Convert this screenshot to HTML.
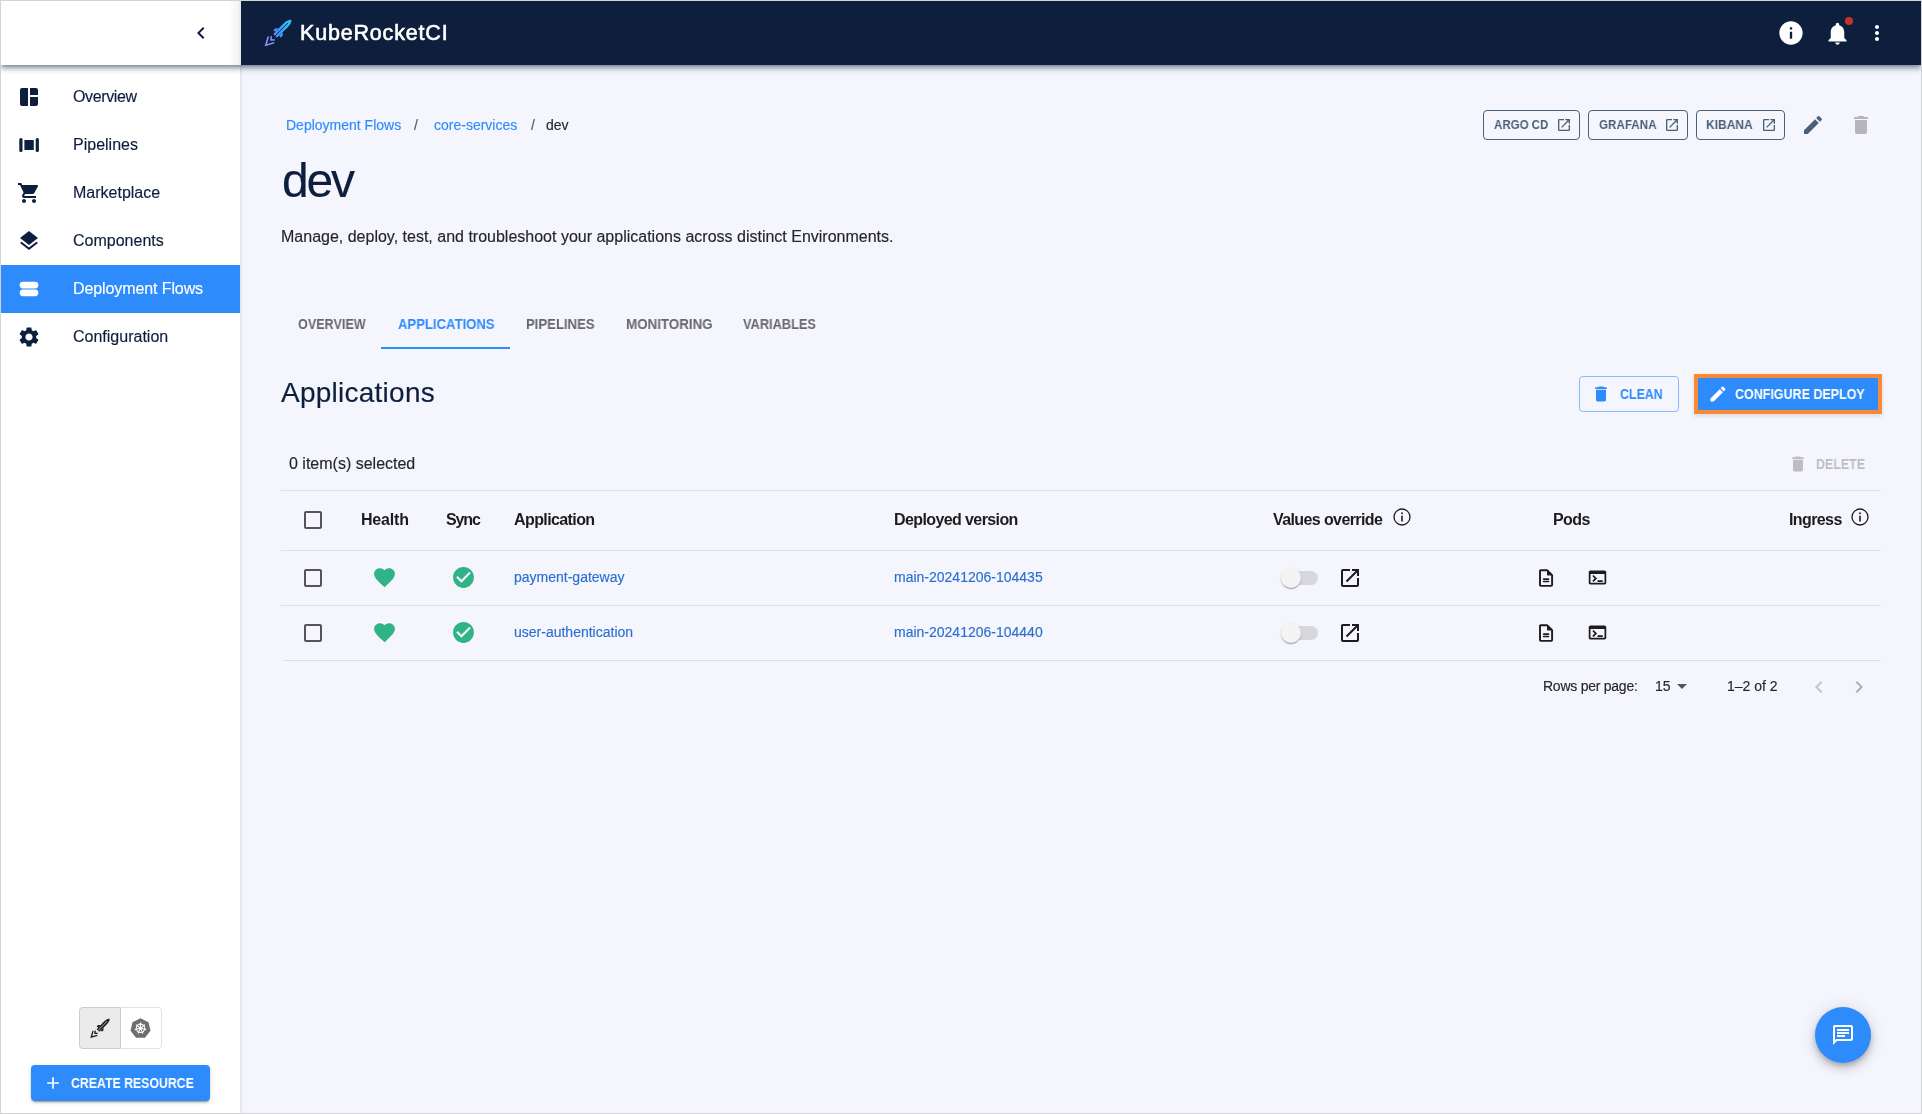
<!DOCTYPE html>
<html><head><meta charset="utf-8">
<style>
*{box-sizing:border-box;margin:0;padding:0}
html,body{width:1922px;height:1114px;overflow:hidden;background:#f5f6fd;font-family:"Liberation Sans",sans-serif}
.a{position:absolute}
.t{position:absolute;line-height:1;white-space:nowrap;will-change:transform;-webkit-text-stroke:0.15px currentColor}
svg{position:absolute;display:block;overflow:visible}
.nav{color:#0d1f3c}
.hcell{font-weight:bold;color:#1c1c1c;-webkit-text-stroke:0}
.lk{color:#2b6fd0}
.div{position:absolute;height:1px;background:#e0e0e3}
.obtn{position:absolute;border:1px solid #4b5f77;border-radius:4px}
.obt{color:#4b5f77;-webkit-text-stroke:0.3px currentColor}
.tab{color:#67676b;-webkit-text-stroke:0.3px currentColor}
.med{-webkit-text-stroke:0.3px currentColor}
</style></head><body>
<div class="a" style="left:1px;top:1px;width:240px;height:1112px;background:#fff;border-right:1px solid #e6e6ea;box-shadow:1px 0 3px rgba(0,0,0,.06)"></div>
<div class="a" style="left:1px;top:265px;width:239px;height:48px;background:#2e8bfc"></div>
<div class="a" style="left:1px;top:1px;width:1920px;height:64px;box-shadow:0 2px 4px -1px rgba(13,31,60,.38),0 4px 5px 0 rgba(13,31,60,.24),0 1px 10px 0 rgba(13,31,60,.16);background:#0d1f3c;z-index:5"><div class="a" style="left:0;top:0;width:240px;height:64px;background:linear-gradient(to right,#fff 0,#fff 228px,#f3f4f6 237px,#e4e6ea 240px)"></div></div>
<div class="a" style="left:0;top:0;width:1922px;height:1114px;z-index:6">
<svg style="left:189.00px;top:21.00px" width="24" height="24" viewBox="0 0 24 24"><path fill="#0d1f3c" d="M15.41 7.41 14 6l-6 6 6 6 1.41-1.41L10.83 12z" /></svg>
<svg style="left:262px;top:17px" width="32" height="32" viewBox="0 0 32 32">
<defs><linearGradient id="rg" gradientUnits="userSpaceOnUse" x1="4" y1="28" x2="29" y2="3"><stop offset="0" stop-color="#b08cf6"/><stop offset="0.28" stop-color="#8a8df8"/><stop offset="0.45" stop-color="#3f8cf6"/><stop offset="1" stop-color="#27e3ef"/></linearGradient></defs>
<g transform="translate(16.25 15.75) rotate(45)">
<g fill="url(#rg)" transform="rotate(-45) scale(1) rotate(45)">
</g></g>
<g fill="url(#rg)" stroke="none">
<g transform="translate(16.25 15.75) rotate(45)">
<path d="M0 -18.4 C2.6 -16.6 2.9 -12.5 2.8 -8 L2.5 4.4 L-2.5 4.4 L-2.8 -8 C-2.9 -12.5 -2.6 -16.6 0 -18.4 Z"/>
<path d="M-2.8 -3.6 L-5.2 -1.3 L-5.2 2 L-2.6 1.2 Z"/>
<path d="M2.8 -3.6 L5.2 -1.3 L5.2 2 L2.6 1.2 Z"/>
</g></g>
<g transform="translate(16.25 15.75) rotate(45)">
<path d="M0 -14 V4.8" stroke="#0d1f3c" stroke-width="0.8"/>
<g fill="none" stroke="url(#rg)" stroke-width="1.55" stroke-linejoin="miter" stroke-linecap="butt">
<path d="M-4.4 9.6 L0 17.6 L4.2 9.9"/><path d="M-2.6 7.4 L0 10.2 L2.6 7.5"/>
</g></g>
</svg>
<div class="t " style="left:300px;top:22.80px;font-size:21.5px;color:#fff;-webkit-text-stroke:0.6px #fff;letter-spacing:0.82px">KubeRocketCI</div>
<svg style="left:1777.00px;top:19.00px" width="28" height="28" viewBox="0 0 24 24"><path fill="#fff" d="M12 2C6.48 2 2 6.48 2 12s4.48 10 10 10 10-4.48 10-10S17.52 2 12 2zm1 15h-2v-6h2v6zm0-8h-2V7h2v2z" /></svg>
<svg style="left:1823.50px;top:20.00px" width="27" height="27" viewBox="0 0 24 24"><path fill="#fff" d="M12 22c1.1 0 2-.9 2-2h-4c0 1.1.89 2 2 2zm6-6v-5c0-3.07-1.64-5.64-4.5-6.32V4c0-.83-.67-1.5-1.5-1.5s-1.5.67-1.5 1.5v.68C7.63 5.36 6 7.92 6 11v5l-2 2v1h16v-1l-2-2z" /></svg>
<div class="a" style="left:1845px;top:17px;width:8px;height:8px;border-radius:50%;background:#c7302c"></div>
<svg style="left:1865.00px;top:21.00px" width="24" height="24" viewBox="0 0 24 24"><path fill="#fff" d="M12 8c1.1 0 2-.9 2-2s-.9-2-2-2-2 .9-2 2 .9 2 2 2zm0 2c-1.1 0-2 .9-2 2s.9 2 2 2 2-.9 2-2-.9-2-2-2zm0 6c-1.1 0-2 .9-2 2s.9 2 2 2 2-.9 2-2-.9-2-2-2z" /></svg>
</div>
<svg style="left:17.00px;top:85.00px" width="24" height="24" viewBox="0 0 24 24"><path fill="#0d1f3c" d="M11 21H5c-1.1 0-2-.9-2-2V5c0-1.1.9-2 2-2h6v18zm2 0h6c1.1 0 2-.9 2-2v-7h-8v9zm8-11V5c0-1.1-.9-2-2-2h-6v7h8z" /></svg>
<div class="t " style="left:73px;top:88.96px;font-size:16px;color:#0d1f3c;letter-spacing:-0.38px">Overview</div>
<div class="t " style="left:73px;top:136.96px;font-size:16px;color:#0d1f3c">Pipelines</div>
<svg style="left:17.00px;top:181.00px" width="24" height="24" viewBox="0 0 24 24"><path fill="#0d1f3c" d="M7 18c-1.1 0-1.99.9-1.99 2S5.9 22 7 22s2-.9 2-2-.9-2-2-2zM1 2v2h2l3.6 7.59-1.35 2.45c-.16.28-.25.61-.25.96 0 1.1.9 2 2 2h12v-2H7.42c-.14 0-.25-.11-.25-.25l.03-.12.9-1.63h7.45c.75 0 1.41-.41 1.75-1.03l3.58-6.49c.08-.14.12-.31.12-.48 0-.55-.45-1-1-1H5.21l-.94-2H1zm16 16c-1.1 0-1.99.9-1.99 2s.89 2 1.99 2 2-.9 2-2-.9-2-2-2z" /></svg>
<div class="t " style="left:73px;top:184.96px;font-size:16px;color:#0d1f3c">Marketplace</div>
<svg style="left:17.00px;top:229.00px" width="24" height="24" viewBox="0 0 24 24"><path fill="#0d1f3c" d="M11.99 18.54l-7.37-5.73L3 14.07l9 7 9-7-1.63-1.27-7.38 5.74zM12 16l7.36-5.73L21 9l-9-7-9 7 1.63 1.27L12 16z" /></svg>
<div class="t " style="left:73px;top:232.96px;font-size:16px;color:#0d1f3c">Components</div>
<div class="t " style="left:73px;top:280.96px;font-size:16px;color:#fff;letter-spacing:-0.1px">Deployment Flows</div>
<svg style="left:17.00px;top:325.00px" width="24" height="24" viewBox="0 0 24 24"><path fill="#0d1f3c" d="M19.14 12.94c.04-.3.06-.61.06-.94 0-.32-.02-.64-.07-.94l2.03-1.58c.18-.14.23-.41.12-.61l-1.92-3.32c-.12-.22-.37-.29-.59-.22l-2.39.96c-.5-.38-1.03-.7-1.62-.94l-.36-2.54c-.04-.24-.24-.41-.48-.41h-3.84c-.24 0-.43.17-.47.41l-.36 2.54c-.59.24-1.13.57-1.62.94l-2.39-.96c-.22-.08-.47 0-.59.22L2.74 8.87c-.12.21-.08.47.12.61l2.03 1.58c-.05.3-.09.63-.09.94s.02.64.07.94l-2.03 1.58c-.18.14-.23.41-.12.61l1.92 3.32c.12.22.37.29.59.22l2.39-.96c.5.38 1.03.7 1.62.94l.36 2.54c.05.24.24.41.48.41h3.84c.24 0 .44-.17.47-.41l.36-2.54c.59-.24 1.13-.56 1.62-.94l2.39.96c.22.08.47 0 .59-.22l1.92-3.32c.12-.22.07-.47-.12-.61l-2.01-1.58zM12 15.6c-1.98 0-3.6-1.62-3.6-3.6s1.62-3.6 3.6-3.6 3.6 1.62 3.6 3.6-1.62 3.6-3.6 3.6z" /></svg>
<div class="t " style="left:73px;top:328.96px;font-size:16px;color:#0d1f3c">Configuration</div>
<svg style="left:17px;top:133px" width="24" height="24" viewBox="0 0 24 24"><rect x="2.3" y="5" width="3.2" height="14" rx="1.5" fill="#0d1f3c"/><rect x="7.4" y="7" width="9.4" height="10" rx="0.6" fill="#0d1f3c"/><rect x="18.7" y="5" width="3.2" height="14" rx="1.5" fill="#0d1f3c"/></svg>
<svg style="left:17px;top:277px" width="24" height="24" viewBox="0 0 24 24"><rect x="2.7" y="4.8" width="18.6" height="6.6" rx="3.1" fill="#fff"/><rect x="2.7" y="12.6" width="18.6" height="6.6" rx="3.1" fill="#fff"/></svg>
<div class="a" style="left:79px;top:1007px;width:83px;height:42px;border:1px solid #e3e3e3;border-radius:4px;background:#fff"></div><div class="a" style="left:79px;top:1007px;width:42px;height:42px;background:#ebebeb;border:1px solid #cdcdcd;border-radius:4px 0 0 4px"></div>
<svg style="left:84px;top:1012px" width="32" height="32" viewBox="0 0 32 32"><g transform="translate(16.2 16.2) scale(0.72) translate(-16.25 -15.75)">
<g fill="#1a1a1a"><g transform="translate(16.25 15.75) rotate(45)">
<path d="M0 -18.4 C2.6 -16.6 2.9 -12.5 2.8 -8 L2.5 4.4 L-2.5 4.4 L-2.8 -8 C-2.9 -12.5 -2.6 -16.6 0 -18.4 Z"/>
<path d="M-2.8 -3.6 L-5.2 -1.3 L-5.2 2 L-2.6 1.2 Z"/><path d="M2.8 -3.6 L5.2 -1.3 L5.2 2 L2.6 1.2 Z"/>
</g></g>
<g transform="translate(16.25 15.75) rotate(45)"><path d="M0 -14 V4.8" stroke="#ebebeb" stroke-width="1"/>
<g fill="none" stroke="#1a1a1a" stroke-width="1.8"><path d="M-4.4 9.6 L0 17.6 L4.2 9.9"/><path d="M-2.6 7.4 L0 10.2 L2.6 7.5"/></g></g>
</g></svg>
<svg style="left:130px;top:1018px" width="21" height="20" viewBox="0 0 21 20"><path d="M10.5 0.3 L18.5 4.2 L20.5 12.8 L15 19.7 L6 19.7 L0.5 12.8 L2.5 4.2 Z" fill="#6e6e6e"/>
<g stroke="#fff" stroke-width="1.1" fill="none"><circle cx="10.5" cy="10.3" r="4.2"/><path d="M10.5 10.3 L10.50 4.50 M10.5 10.3 L15.03 6.68 M10.5 10.3 L16.15 11.59 M10.5 10.3 L13.02 15.53 M10.5 10.3 L7.98 15.53 M10.5 10.3 L4.85 11.59 M10.5 10.3 L5.97 6.68 "/></g><circle cx="10.5" cy="10.3" r="1.4" fill="#fff"/></svg>
<div class="a" style="left:31px;top:1065px;width:179px;height:36px;background:#2e8bfc;border-radius:4px;box-shadow:0 3px 1px -2px rgba(0,0,0,.2),0 2px 2px 0 rgba(0,0,0,.14),0 1px 5px 0 rgba(0,0,0,.12)"></div>
<svg style="left:43.00px;top:1073.00px" width="20" height="20" viewBox="0 0 24 24"><path fill="#fff" d="M19 13h-6v6h-2v-6H5v-2h6V5h2v6h6v2z" /></svg>
<div class="t" style="left:71px;top:1076.15px;font-size:14px;font-weight:bold;-webkit-text-stroke:0;transform:scaleX(0.879);transform-origin:0 0;color:#fff">CREATE RESOURCE</div>
<div class="t " style="left:285.5px;top:118.15px;font-size:14px;color:#2e8bfc">Deployment Flows</div>
<div class="t " style="left:414px;top:118.15px;font-size:14px;color:#555">/</div>
<div class="t " style="left:433.5px;top:118.15px;font-size:14px;color:#2e8bfc">core-services</div>
<div class="t " style="left:531px;top:118.15px;font-size:14px;color:#555">/</div>
<div class="t " style="left:546px;top:118.15px;font-size:14px;color:#262626">dev</div>
<div class="t " style="left:281.5px;top:157.07px;font-size:48px;color:#0d1f3c;letter-spacing:-2.2px">dev</div>
<div class="t " style="left:281px;top:229.46px;font-size:16px;color:#262626">Manage, deploy, test, and troubleshoot your applications across distinct Environments.</div>
<div class="obtn" style="left:1483px;top:110px;width:97px;height:30px"></div>
<div class="t" style="left:1493.5px;top:117.80px;font-size:13px;font-weight:bold;-webkit-text-stroke:0;transform:scaleX(0.885);transform-origin:0 0;color:#4b5f77">ARGO CD</div>
<svg style="left:1556.00px;top:117.00px" width="16" height="16" viewBox="0 0 24 24"><path fill="#4b5f77" d="M19 19H5V5h7V3H5c-1.11 0-2 .9-2 2v14c0 1.1.89 2 2 2h14c1.1 0 2-.9 2-2v-7h-2v7zM14 3v2h3.59l-9.83 9.83 1.41 1.41L19 6.41V10h2V3h-7z" /></svg>
<div class="obtn" style="left:1588px;top:110px;width:100px;height:30px"></div>
<div class="t" style="left:1598.5px;top:117.80px;font-size:13px;font-weight:bold;-webkit-text-stroke:0;transform:scaleX(0.895);transform-origin:0 0;color:#4b5f77">GRAFANA</div>
<svg style="left:1664.00px;top:117.00px" width="16" height="16" viewBox="0 0 24 24"><path fill="#4b5f77" d="M19 19H5V5h7V3H5c-1.11 0-2 .9-2 2v14c0 1.1.89 2 2 2h14c1.1 0 2-.9 2-2v-7h-2v7zM14 3v2h3.59l-9.83 9.83 1.41 1.41L19 6.41V10h2V3h-7z" /></svg>
<div class="obtn" style="left:1696px;top:110px;width:89px;height:30px"></div>
<div class="t" style="left:1706px;top:117.80px;font-size:13px;font-weight:bold;-webkit-text-stroke:0;transform:scaleX(0.922);transform-origin:0 0;color:#4b5f77">KIBANA</div>
<svg style="left:1761.00px;top:117.00px" width="16" height="16" viewBox="0 0 24 24"><path fill="#4b5f77" d="M19 19H5V5h7V3H5c-1.11 0-2 .9-2 2v14c0 1.1.89 2 2 2h14c1.1 0 2-.9 2-2v-7h-2v7zM14 3v2h3.59l-9.83 9.83 1.41 1.41L19 6.41V10h2V3h-7z" /></svg>
<svg style="left:1801.00px;top:112.50px" width="24" height="24" viewBox="0 0 24 24"><path fill="#4b5f77" d="M3 17.25V21h3.75L17.81 9.94l-3.75-3.75L3 17.25zM20.71 7.04c.39-.39.39-1.02 0-1.41l-2.34-2.34a.9959.9959 0 0 0-1.41 0l-1.83 1.83 3.75 3.75 1.83-1.83z" /></svg>
<svg style="left:1849.00px;top:113.00px" width="24" height="24" viewBox="0 0 24 24"><path fill="#b5b5bb" d="M6 19c0 1.1.9 2 2 2h8c1.1 0 2-.9 2-2V7H6v12zM19 4h-3.5l-1-1h-5l-1 1H5v2h14V4z" /></svg>
<div class="t" style="left:297.6px;top:317.15px;font-size:14px;font-weight:bold;-webkit-text-stroke:0;transform:scaleX(0.899);transform-origin:0 0;color:#67676b">OVERVIEW</div>
<div class="t" style="left:397.7px;top:317.15px;font-size:14px;font-weight:bold;-webkit-text-stroke:0;transform:scaleX(0.936);transform-origin:0 0;color:#2e8bfc">APPLICATIONS</div>
<div class="t" style="left:525.5px;top:317.15px;font-size:14px;font-weight:bold;-webkit-text-stroke:0;transform:scaleX(0.9375);transform-origin:0 0;color:#67676b">PIPELINES</div>
<div class="t" style="left:625.5px;top:317.15px;font-size:14px;font-weight:bold;-webkit-text-stroke:0;transform:scaleX(0.955);transform-origin:0 0;color:#67676b">MONITORING</div>
<div class="t" style="left:743px;top:317.15px;font-size:14px;font-weight:bold;-webkit-text-stroke:0;transform:scaleX(0.9125);transform-origin:0 0;color:#67676b">VARIABLES</div>
<div class="a" style="left:381px;top:347px;width:129px;height:2px;background:#2e8bfc"></div>
<div class="t " style="left:281px;top:379.30px;font-size:28px;color:#0d1f3c;letter-spacing:0.25px">Applications</div>
<div class="a" style="left:1579px;top:376px;width:100px;height:36px;border:1px solid rgba(46,139,252,.55);border-radius:4px"></div>
<svg style="left:1591.00px;top:384.00px" width="20" height="20" viewBox="0 0 24 24"><path fill="#2e8bfc" d="M6 19c0 1.1.9 2 2 2h8c1.1 0 2-.9 2-2V7H6v12zM19 4h-3.5l-1-1h-5l-1 1H5v2h14V4z" /></svg>
<div class="t" style="left:1619.7px;top:387.15px;font-size:14px;font-weight:bold;-webkit-text-stroke:0;transform:scaleX(0.885);transform-origin:0 0;color:#2e8bfc">CLEAN</div>
<div class="a" style="left:1694px;top:374px;width:188px;height:40px;background:#2e8bfc;border:4px solid #f88936;box-shadow:0 2px 4px rgba(0,0,0,.08),0 1px 6px rgba(0,0,0,.05)"></div>
<svg style="left:1707.50px;top:383.50px" width="20" height="20" viewBox="0 0 24 24"><path fill="#fff" d="M3 17.25V21h3.75L17.81 9.94l-3.75-3.75L3 17.25zM20.71 7.04c.39-.39.39-1.02 0-1.41l-2.34-2.34a.9959.9959 0 0 0-1.41 0l-1.83 1.83 3.75 3.75 1.83-1.83z" /></svg>
<div class="t" style="left:1735.3px;top:387.15px;font-size:14px;font-weight:bold;-webkit-text-stroke:0;transform:scaleX(0.892);transform-origin:0 0;color:#fff">CONFIGURE DEPLOY</div>
<div class="t " style="left:289px;top:456.46px;font-size:16px;color:#262626">0 item(s) selected</div>
<svg style="left:1788.00px;top:454.00px" width="20" height="20" viewBox="0 0 24 24"><path fill="#bdbdc0" d="M6 19c0 1.1.9 2 2 2h8c1.1 0 2-.9 2-2V7H6v12zM19 4h-3.5l-1-1h-5l-1 1H5v2h14V4z" /></svg>
<div class="t" style="left:1816.2px;top:457.15px;font-size:14px;font-weight:bold;-webkit-text-stroke:0;transform:scaleX(0.887);transform-origin:0 0;color:#bdbdc0">DELETE</div>
<div class="div" style="left:281px;top:490px;width:1600px"></div>
<div class="div" style="left:281px;top:550px;width:1600px"></div>
<div class="div" style="left:281px;top:605px;width:1600px"></div>
<div class="div" style="left:283px;top:660px;width:1598px"></div>
<svg style="left:301.00px;top:508.00px" width="24" height="24" viewBox="0 0 24 24"><path fill="#555" d="M19 5v14H5V5h14m0-2H5c-1.1 0-2 .9-2 2v14c0 1.1.9 2 2 2h14c1.1 0 2-.9 2-2V5c0-1.1-.9-2-2-2z" /></svg>
<div class="t hcell" style="left:361px;top:511.96px;font-size:16px;letter-spacing:-0.18px">Health</div>
<div class="t hcell" style="left:446px;top:511.96px;font-size:16px;letter-spacing:-1.1px">Sync</div>
<div class="t hcell" style="left:513.5px;top:511.96px;font-size:16px;letter-spacing:-0.6px">Application</div>
<div class="t hcell" style="left:893.5px;top:511.96px;font-size:16px;letter-spacing:-0.6px">Deployed version</div>
<div class="t hcell" style="left:1272.5px;top:511.96px;font-size:16px;letter-spacing:-0.6px">Values override</div>
<div class="t hcell" style="left:1553px;top:511.96px;font-size:16px;letter-spacing:-0.6px">Pods</div>
<div class="t hcell" style="left:1788.5px;top:511.96px;font-size:16px;letter-spacing:-0.6px">Ingress</div>
<svg style="left:1391px;top:506px" width="22" height="22" viewBox="-11 -11 22 22"><circle r="8.0" fill="none" stroke="#1c1c1c" stroke-width="1.3"/><rect x="-0.8" y="-1.3" width="1.6" height="5.8" fill="#1c1c1c"/><circle cy="-3.7" r="0.95" fill="#1c1c1c"/></svg>
<svg style="left:1849px;top:506px" width="22" height="22" viewBox="-11 -11 22 22"><circle r="8.0" fill="none" stroke="#1c1c1c" stroke-width="1.3"/><rect x="-0.8" y="-1.3" width="1.6" height="5.8" fill="#1c1c1c"/><circle cy="-3.7" r="0.95" fill="#1c1c1c"/></svg>
<svg style="left:301.00px;top:566.00px" width="24" height="24" viewBox="0 0 24 24"><path fill="#555" d="M19 5v14H5V5h14m0-2H5c-1.1 0-2 .9-2 2v14c0 1.1.9 2 2 2h14c1.1 0 2-.9 2-2V5c0-1.1-.9-2-2-2z" /></svg>
<svg style="left:372.00px;top:565.20px" width="25" height="25" viewBox="0 0 24 24"><path fill="#30b386" d="m12 21.35-1.45-1.32C5.4 15.36 2 12.28 2 8.5 2 5.42 4.42 3 7.5 3c1.74 0 3.41.81 4.5 2.09C13.09 3.81 14.76 3 16.5 3 19.58 3 22 5.42 22 8.5c0 3.78-3.4 6.86-8.55 11.54L12 21.35z" /></svg>
<svg style="left:451.00px;top:565.00px" width="25" height="25" viewBox="0 0 24 24"><path fill="#30b386" d="M12 2C6.48 2 2 6.48 2 12s4.48 10 10 10 10-4.48 10-10S17.52 2 12 2zm-2 15-5-5 1.41-1.41L10 14.17l7.59-7.59L19 8l-9 9z" /></svg>
<div class="t lk" style="left:513.5px;top:570.15px;font-size:14px;">payment-gateway</div>
<div class="t lk" style="left:893.5px;top:570.15px;font-size:14px;">main-20241206-104435</div>
<div class="a" style="left:1284px;top:571px;width:34px;height:14px;border-radius:7px;background:#d7d8de"></div>
<div class="a" style="left:1281px;top:568px;width:20px;height:20px;border-radius:50%;background:#f4f4f4;box-shadow:0 2px 1px -1px rgba(0,0,0,.2),0 1px 1px 0 rgba(0,0,0,.14),0 1px 3px 0 rgba(0,0,0,.12)"></div>
<svg style="left:1338.00px;top:566.00px" width="24" height="24" viewBox="0 0 24 24"><path fill="#1c1c1c" d="M19 19H5V5h7V3H5c-1.11 0-2 .9-2 2v14c0 1.1.89 2 2 2h14c1.1 0 2-.9 2-2v-7h-2v7zM14 3v2h3.59l-9.83 9.83 1.41 1.41L19 6.41V10h2V3h-7z" /></svg>
<svg style="left:1538px;top:568px" width="17" height="20" viewBox="0 0 17 20"><g fill="none" stroke="#1c1c1c" stroke-linejoin="round"><path d="M2 3.1 Q2 2.3 2.8 2.3 H9.3 L14.1 7.1 V17.1 Q14.1 17.9 13.3 17.9 H2.8 Q2 17.9 2 17.1 Z" stroke-width="1.9"/><path d="M9.6 2.4 V6.8 H14" stroke-width="1.2" fill="#1c1c1c"/><path d="M5.6 11.1 H10.6 M5.6 13.5 H10.6" stroke-width="1.6" stroke-linecap="round"/></g></svg>
<svg style="left:1587.10px;top:567.00px" width="21" height="21" viewBox="0 0 24 24"><path fill="#1c1c1c" d="M20 4H4c-1.11 0-2 .9-2 2v12c0 1.1.89 2 2 2h16c1.1 0 2-.9 2-2V6c0-1.1-.9-2-2-2zm0 14H4V8h16v10zm-2-1h-6v-2h6v2zM7.5 17l-1.41-1.41L8.67 13l-2.59-2.59L7.5 9l4 4-4 4z" /></svg>
<svg style="left:301.00px;top:621.00px" width="24" height="24" viewBox="0 0 24 24"><path fill="#555" d="M19 5v14H5V5h14m0-2H5c-1.1 0-2 .9-2 2v14c0 1.1.9 2 2 2h14c1.1 0 2-.9 2-2V5c0-1.1-.9-2-2-2z" /></svg>
<svg style="left:372.00px;top:620.20px" width="25" height="25" viewBox="0 0 24 24"><path fill="#30b386" d="m12 21.35-1.45-1.32C5.4 15.36 2 12.28 2 8.5 2 5.42 4.42 3 7.5 3c1.74 0 3.41.81 4.5 2.09C13.09 3.81 14.76 3 16.5 3 19.58 3 22 5.42 22 8.5c0 3.78-3.4 6.86-8.55 11.54L12 21.35z" /></svg>
<svg style="left:451.00px;top:620.00px" width="25" height="25" viewBox="0 0 24 24"><path fill="#30b386" d="M12 2C6.48 2 2 6.48 2 12s4.48 10 10 10 10-4.48 10-10S17.52 2 12 2zm-2 15-5-5 1.41-1.41L10 14.17l7.59-7.59L19 8l-9 9z" /></svg>
<div class="t lk" style="left:513.5px;top:625.15px;font-size:14px;">user-authentication</div>
<div class="t lk" style="left:893.5px;top:625.15px;font-size:14px;">main-20241206-104440</div>
<div class="a" style="left:1284px;top:626px;width:34px;height:14px;border-radius:7px;background:#d7d8de"></div>
<div class="a" style="left:1281px;top:623px;width:20px;height:20px;border-radius:50%;background:#f4f4f4;box-shadow:0 2px 1px -1px rgba(0,0,0,.2),0 1px 1px 0 rgba(0,0,0,.14),0 1px 3px 0 rgba(0,0,0,.12)"></div>
<svg style="left:1338.00px;top:621.00px" width="24" height="24" viewBox="0 0 24 24"><path fill="#1c1c1c" d="M19 19H5V5h7V3H5c-1.11 0-2 .9-2 2v14c0 1.1.89 2 2 2h14c1.1 0 2-.9 2-2v-7h-2v7zM14 3v2h3.59l-9.83 9.83 1.41 1.41L19 6.41V10h2V3h-7z" /></svg>
<svg style="left:1538px;top:623px" width="17" height="20" viewBox="0 0 17 20"><g fill="none" stroke="#1c1c1c" stroke-linejoin="round"><path d="M2 3.1 Q2 2.3 2.8 2.3 H9.3 L14.1 7.1 V17.1 Q14.1 17.9 13.3 17.9 H2.8 Q2 17.9 2 17.1 Z" stroke-width="1.9"/><path d="M9.6 2.4 V6.8 H14" stroke-width="1.2" fill="#1c1c1c"/><path d="M5.6 11.1 H10.6 M5.6 13.5 H10.6" stroke-width="1.6" stroke-linecap="round"/></g></svg>
<svg style="left:1587.10px;top:622.00px" width="21" height="21" viewBox="0 0 24 24"><path fill="#1c1c1c" d="M20 4H4c-1.11 0-2 .9-2 2v12c0 1.1.89 2 2 2h16c1.1 0 2-.9 2-2V6c0-1.1-.9-2-2-2zm0 14H4V8h16v10zm-2-1h-6v-2h6v2zM7.5 17l-1.41-1.41L8.67 13l-2.59-2.59L7.5 9l4 4-4 4z" /></svg>
<div class="t " style="left:1543px;top:679.15px;font-size:14px;color:#262626;letter-spacing:-0.25px">Rows per page:</div>
<div class="t " style="left:1654.5px;top:679.15px;font-size:14px;color:#262626">15</div>
<svg style="left:1670.00px;top:674.00px" width="24" height="24" viewBox="0 0 24 24"><path fill="#555" d="M7 10l5 5 5-5z" /></svg>
<div class="t " style="left:1727px;top:679.15px;font-size:14px;color:#262626">1–2 of 2</div>
<svg style="left:1806.50px;top:674.50px" width="24" height="24" viewBox="0 0 24 24"><path fill="#c4c4c8" d="M15.41 7.41 14 6l-6 6 6 6 1.41-1.41L10.83 12z" /></svg>
<svg style="left:1846.50px;top:674.50px" width="24" height="24" viewBox="0 0 24 24"><path fill="#b0b0b4" d="M10 6 8.59 7.41 13.17 12l-4.58 4.59L10 18l6-6z" /></svg>
<div class="a" style="left:1815px;top:1007px;width:56px;height:56px;border-radius:50%;background:#2e8bfc;box-shadow:0 3px 5px -1px rgba(0,0,0,.2),0 6px 10px 0 rgba(0,0,0,.14),0 1px 18px 0 rgba(0,0,0,.12)"></div>
<svg style="left:1831.00px;top:1023.00px" width="24" height="24" viewBox="0 0 24 24"><path fill="#fff" d="M4 4h16v12H5.17L4 17.17V4m0-2c-1.1 0-1.99.9-1.99 2L2 22l4-4h14c1.1 0 2-.9 2-2V4c0-1.1-.9-2-2-2H4zm2 10h8v2H6v-2zm0-3h12v2H6V9zm0-3h12v2H6V6z" /></svg>
<div class="a" style="left:0;top:0;width:1922px;height:1114px;border:1px solid #d4d4d4;z-index:20"></div>
</body></html>
